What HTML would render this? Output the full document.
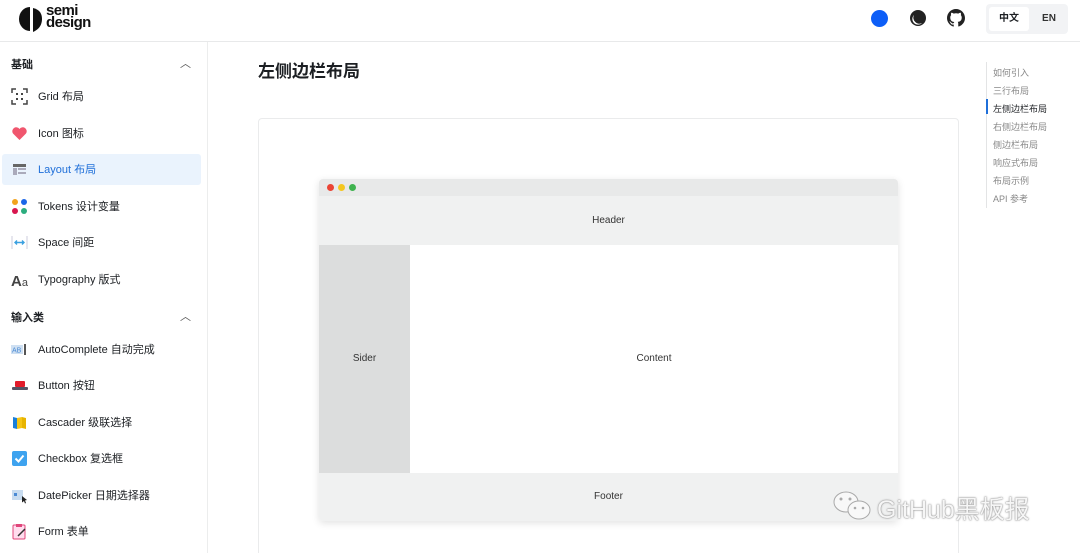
<!DOCTYPE html>
<html><head><meta charset="utf-8"><style>
*{margin:0;padding:0;box-sizing:border-box}
html,body{width:1080px;height:553px;overflow:hidden}
body{background:#fff;font-family:"Liberation Sans","Noto Sans CJK SC",sans-serif;color:#1c1f23;position:relative}
.top{position:absolute;left:0;top:0;width:1080px;height:42px;border-bottom:1px solid #e8e9ea;background:#fff}
.side{position:absolute;left:0;top:42px;width:208px;height:511px;border-right:1px solid #eceded}
.grp{position:absolute;left:11px;font-size:11px;font-weight:bold;color:#1c1f23}
.car{position:absolute;left:180px;font-size:11px;color:#555}
.it{position:absolute;left:2px;width:199px;height:31px;border-radius:3px;font-size:11px;line-height:33px;padding-left:36px}
.it.sel{background:#eaf3fd;color:#1f6fd9}
.ic{position:absolute;left:9px;top:7px;width:17px;height:17px}
.toc{position:absolute;left:986px;top:62px;height:146px;border-left:1px solid #e3e4e5}
.toc div{position:absolute;left:6px;font-size:9px;color:#888;white-space:nowrap}
</style></head><body>
<div class="top">
 <svg style="position:absolute;left:19px;top:5px" width="30" height="28" viewBox="0 0 30 28"><path d="M11 2 A11 12 0 0 0 11 26 Z" fill="#111"/><path d="M14 3 Q23 5 23 14 Q23 23 14 27 Z" fill="#111"/></svg>
 <div style="position:absolute;left:46px;top:5px;font-size:15px;font-weight:bold;line-height:12px;letter-spacing:-0.6px;color:#111">semi<br>design</div>
 <div style="position:absolute;left:871px;top:10px;width:17px;height:17px;border-radius:50%;background:#0d5ef7"></div>
 <svg style="position:absolute;left:909px;top:9px" width="18" height="18" viewBox="0 0 18 18"><circle cx="9" cy="9" r="8" fill="#222"/><path d="M5 6 A6 6 0 0 0 13 14 A5 5 0 0 1 5 6Z" fill="#fff"/></svg>
 <svg style="position:absolute;left:947px;top:9px" width="18" height="18" viewBox="0 0 16 16"><path fill="#222" d="M8 0C3.6 0 0 3.6 0 8c0 3.5 2.3 6.5 5.5 7.6.4.1.5-.2.5-.4v-1.4c-2.2.5-2.700-1-2.700-1-.4-.9-.9-1.200-.9-1.200-.7-.5.1-.5.1-.5.8.1 1.200.8 1.200.8.7 1.300 1.900.9 2.300.7.1-.5.3-.9.5-1.100-1.800-.2-3.600-.9-3.600-4 0-.9.3-1.600.8-2.100-.1-.2-.4-1 .1-2.100 0 0 .7-.2 2.200.8.6-.2 1.300-.3 2-.3s1.400.1 2 .3c1.500-1 2.200-.8 2.200-.8.4 1.100.2 1.900.1 2.100.5.6.8 1.300.8 2.100 0 3.100-1.900 3.700-3.600 3.900.3.3.5.8.5 1.500v2.200c0 .2.1.5.6.4C13.700 14.500 16 11.500 16 8c0-4.400-3.600-8-8-8z"/></svg>
 <div style="position:absolute;left:986px;top:4px;width:82px;height:30px;background:#f2f3f5;border-radius:4px">
  <div style="position:absolute;left:3px;top:3px;width:40px;height:24px;background:#fff;border-radius:3px;font-size:10px;font-weight:bold;line-height:24px;text-align:center">中文</div>
  <div style="position:absolute;left:46px;top:3px;width:34px;line-height:24px;font-size:10px;font-weight:bold;text-align:center;color:#333">EN</div>
 </div>
</div>
<div class="side">
 <div class="grp" style="top:14px">基础</div><div class="car" style="top:13px">︿</div>
 <div class="it" style="top:39px"><svg class="ic" viewBox="0 0 17 17"><path d="M1 5V1h4M12 1h4v4M16 12v4h-4M5 16H1v-4" stroke="#444" fill="none" stroke-width="1.5"/><g fill="#444"><rect x="5" y="5" width="2" height="2"/><rect x="10" y="5" width="2" height="2"/><rect x="5" y="10" width="2" height="2"/><rect x="10" y="10" width="2" height="2"/></g></svg>Grid 布局</div>
 <div class="it" style="top:76px"><svg class="ic" viewBox="0 0 17 17"><path d="M8.5 15L2 8.5A3.6 3.6 0 0 1 8.5 4 3.6 3.6 0 0 1 15 8.5Z" fill="#f0566e"/></svg>Icon 图标</div>
 <div class="it sel" style="top:112px"><svg class="ic" viewBox="0 0 17 17"><rect x="2" y="3" width="13" height="3" fill="#666"/><rect x="2" y="7" width="4" height="7" fill="#aab"/><rect x="7" y="7" width="8" height="2" fill="#aab"/><rect x="7" y="11" width="8" height="2" fill="#aab"/></svg>Layout 布局</div>
 <div class="it" style="top:149px"><svg class="ic" viewBox="0 0 17 17"><circle cx="4" cy="4" r="3" fill="#f2a31d"/><circle cx="13" cy="4" r="3" fill="#1a66e8"/><circle cx="4" cy="13" r="3" fill="#d8164e"/><circle cx="13" cy="13" r="3" fill="#2cad7e"/></svg>Tokens 设计变量</div>
 <div class="it" style="top:185px"><svg class="ic" viewBox="0 0 17 17"><path d="M1 2v13M16 2v13" stroke="#ccd" stroke-width="1"/><path d="M4 8.5h9M6 6.5l-2 2 2 2M11 6.5l2 2-2 2" stroke="#3aa0e0" stroke-width="1.4" fill="none"/></svg>Space 间距</div>
 <div class="it" style="top:222px"><span style="position:absolute;left:9px;top:1px;font-size:15px;font-weight:bold;color:#444">A<span style="font-size:11px;font-weight:normal">a</span></span>Typography 版式</div>
 <div class="grp" style="top:267px">输入类</div><div class="car" style="top:266px">︿</div>
 <div class="it" style="top:292px"><svg class="ic" viewBox="0 0 17 17"><rect x="0" y="4" width="12" height="9" fill="#cfe0f2"/><text x="1" y="11.5" font-size="7" fill="#4a8ad4" font-family="Liberation Sans">AB</text><rect x="13" y="3" width="2" height="11" fill="#555"/></svg>AutoComplete 自动完成</div>
 <div class="it" style="top:328px"><svg class="ic" viewBox="0 0 17 17"><rect x="4" y="4" width="10" height="6" rx="1" fill="#e21b2b"/><rect x="1" y="10" width="16" height="3" rx="1" fill="#556"/></svg>Button 按钮</div>
 <div class="it" style="top:365px"><svg class="ic" viewBox="0 0 17 17"><path d="M2 3l4 1v11l-4-1z" fill="#1a7fd9"/><path d="M6 4l5-1v11l-5 1z" fill="#f6c514"/><path d="M11 3l4 1v11l-4-1z" fill="#e8b400"/></svg>Cascader 级联选择</div>
 <div class="it" style="top:401px"><svg class="ic" viewBox="0 0 17 17"><rect x="1" y="1" width="15" height="15" rx="2" fill="#3ea3ef"/><path d="M4.5 8.5l3 3 5-6" stroke="#fff" stroke-width="2" fill="none"/></svg>Checkbox 复选框</div>
 <div class="it" style="top:438px"><svg class="ic" viewBox="0 0 17 17"><rect x="1" y="3" width="11" height="10" fill="#c8dcf0"/><rect x="3" y="6" width="3" height="3" fill="#4a8ad4"/><path d="M11 9l5 4-2 .5 1 2.5-1 .5-1-2.5-2 1.5z" fill="#222"/></svg>DatePicker 日期选择器</div>
 <div class="it" style="top:474px"><svg class="ic" viewBox="0 0 17 17"><rect x="2" y="2" width="12" height="14" rx="1" fill="#fde" stroke="#e0457a"/><rect x="5" y="1" width="6" height="3" fill="#e0457a"/><path d="M7 13l7-7" stroke="#333" stroke-width="1.5"/></svg>Form 表单</div>
</div>
<div style="position:absolute;left:258px;top:57px;font-size:17px;font-weight:bold;color:#1c1f23">左侧边栏布局</div>
<div style="position:absolute;left:258px;top:118px;width:701px;height:450px;border:1px solid #eaebec;border-radius:4px"></div>
<div style="position:absolute;left:319px;top:179px;width:579px;height:342px;border-radius:4px;overflow:hidden;box-shadow:0 2px 8px rgba(0,0,0,.12);background:#fff">
 <div style="height:17px;background:#e8e9e9;position:relative">
  <span style="position:absolute;left:8px;top:5px;width:7px;height:7px;border-radius:50%;background:#eb4435"></span>
  <span style="position:absolute;left:19px;top:5px;width:7px;height:7px;border-radius:50%;background:#f4c720"></span>
  <span style="position:absolute;left:30px;top:5px;width:7px;height:7px;border-radius:50%;background:#3fb34f"></span>
 </div>
 <div style="height:49px;background:#f0f1f1;font-size:10px;text-align:center;line-height:49px;color:#333">Header</div>
 <div style="position:absolute;left:0;top:66px;width:91px;height:228px;background:#dcdddd;font-size:10px;text-align:center;line-height:228px;color:#333">Sider</div>
 <div style="position:absolute;left:91px;top:66px;width:488px;height:228px;font-size:10px;text-align:center;line-height:228px;color:#333">Content</div>
 <div style="position:absolute;left:0;top:294px;width:579px;height:48px;background:#f0f1f1;font-size:10px;text-align:center;line-height:48px;color:#333">Footer</div>
</div>
<div class="toc">
 <div style="top:4px">如何引入</div><div style="top:22px">三行布局</div>
 <div style="top:40px;color:#1c1f23">左侧边栏布局</div><div style="top:58px">右侧边栏布局</div>
 <div style="top:76px">侧边栏布局</div><div style="top:94px">响应式布局</div>
 <div style="top:112px">布局示例</div><div style="top:130px">API 参考</div>
 <span style="position:absolute;left:-1px;top:37px;width:2px;height:15px;background:#1f6fd9"></span>
</div>
<svg style="position:absolute;left:832px;top:490px" width="42" height="34" viewBox="0 0 42 34"><ellipse cx="14" cy="12" rx="12" ry="10" fill="#f8f8f8" stroke="#aaa"/><ellipse cx="27" cy="20" rx="11" ry="9" fill="#f8f8f8" stroke="#aaa"/><circle cx="9" cy="9" r="1.5" fill="#aaa"/><circle cx="18" cy="9" r="1.5" fill="#aaa"/><circle cx="23" cy="18" r="1.3" fill="#aaa"/><circle cx="31" cy="18" r="1.3" fill="#aaa"/></svg>
<div style="position:absolute;left:877px;top:490px;font-size:25px;color:#f6f6f6;text-shadow:0 0 1px #777,0 0 2px #999">GitHub黑板报</div>
</body></html>
